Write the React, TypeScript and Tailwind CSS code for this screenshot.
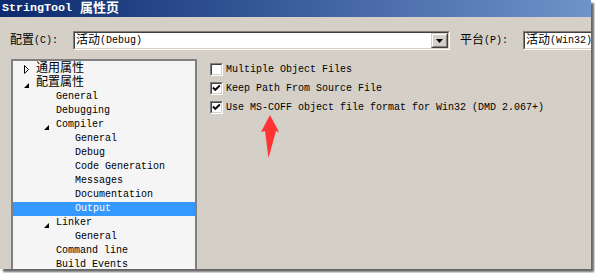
import React from 'react';

const mono = "font-['Liberation_Mono','Noto_Sans_CJK_SC',monospace]";

type Node = { label: string; pad: string; toggle?: 'open' | 'closed'; cjk?: boolean; selected?: boolean };

const tree: Node[] = [
  { label: '通用属性', pad: 'pl-[10px]', toggle: 'closed', cjk: true },
  { label: '配置属性', pad: 'pl-[10px]', toggle: 'open', cjk: true },
  { label: 'General', pad: 'pl-[43px]' },
  { label: 'Debugging', pad: 'pl-[43px]' },
  { label: 'Compiler', pad: 'pl-[30px]', toggle: 'open' },
  { label: 'General', pad: 'pl-[62px]' },
  { label: 'Debug', pad: 'pl-[62px]' },
  { label: 'Code Generation', pad: 'pl-[62px]' },
  { label: 'Messages', pad: 'pl-[62px]' },
  { label: 'Documentation', pad: 'pl-[62px]' },
  { label: 'Output', pad: 'pl-[62px]', selected: true },
  { label: 'Linker', pad: 'pl-[30px]', toggle: 'open' },
  { label: 'General', pad: 'pl-[62px]' },
  { label: 'Command line', pad: 'pl-[43px]' },
  { label: 'Build Events', pad: 'pl-[43px]' },
];

const options = [
  { label: 'Multiple Object Files', checked: false },
  { label: 'Keep Path From Source File', checked: true },
  { label: 'Use MS-COFF object file format for Win32 (DMD 2.067+)', checked: true },
];

function Sunken({ className, children }: { className: string; children: React.ReactNode }) {
  return (
    <div className={`border border-t-[#808080] border-l-[#808080] border-b-white border-r-white ${className}`}>
      <div className="h-full border border-t-[#404040] border-l-[#404040] border-b-[#d4d0c8] border-r-[#d4d0c8] bg-white">
        {children}
      </div>
    </div>
  );
}

function Toggle({ open }: { open: boolean }) {
  return (
    <svg width="13" height="14" viewBox="0 0 13 14" className="shrink-0">
      {open ? (
        <polygon points="6,7 6,12 1,12" fill="#000" />
      ) : (
        <polygon points="1.5,3.5 5.5,7.5 1.5,11.5" fill="none" stroke="#000" strokeWidth="1" />
      )}
    </svg>
  );
}

function Checkbox({ checked }: { checked: boolean }) {
  return (
    <Sunken className="w-[13px] h-[13px] shrink-0">
      {checked && (
        <svg width="9" height="9" viewBox="0 0 9 9">
          <polyline points="1,3.5 3.3,6 7.8,1.5" fill="none" stroke="#000" strokeWidth="1.9" />
        </svg>
      )}
    </Sunken>
  );
}

export default function App() {
  return (
    <div className={`w-[595px] h-[273px] bg-white overflow-hidden ${mono} text-[10px] text-black`}>
      <div className="relative w-[591px] h-[269px] bg-[#d4d0c8] overflow-hidden shadow-[3px_3px_2px_rgba(0,0,0,0.6)] flex flex-col">
        {/* title bar */}
        <div className="h-[17px] shrink-0 bg-gradient-to-r from-[#0c2a6e] to-[#7193cb] flex items-center pl-[2px] text-white font-bold whitespace-nowrap">
          <span className="text-[11.67px]">StringTool</span>
          <span className="text-[13px] ml-[8px]">属性页</span>
        </div>

        {/* configuration row */}
        <div className="flex items-center mt-[14px] h-[19px] shrink-0 whitespace-nowrap">
          <div className="w-[73px] pl-[10px] flex items-center shrink-0">
            <span className="text-[12px]">配置</span>
            <span>(C):</span>
          </div>
          <Sunken className="w-[377px] h-[19px] shrink-0">
            <div className="flex items-center h-full pl-[1px]">
              <span className="text-[12px]">活动</span>
              <span>(Debug)</span>
              <div className="ml-auto w-[17px] h-full border border-t-[#d4d0c8] border-l-[#d4d0c8] border-b-[#404040] border-r-[#404040] bg-[#d4d0c8]">
                <div className="h-full border border-t-white border-l-white border-b-[#808080] border-r-[#808080] flex items-center justify-center">
                  <svg width="7" height="4" viewBox="0 0 7 4">
                    <polygon points="0,0 7,0 3.5,4" fill="#000" />
                  </svg>
                </div>
              </div>
            </div>
          </Sunken>
          <div className="w-[63px] ml-[10px] flex items-center shrink-0">
            <span className="text-[12px]">平台</span>
            <span>(P):</span>
          </div>
          <Sunken className="w-[120px] h-[19px] shrink-0">
            <div className="flex items-center h-full pl-[1px]">
              <span className="text-[12px]">活动</span>
              <span>(Win32)</span>
            </div>
          </Sunken>
        </div>

        {/* body */}
        <div className="flex mt-[9px] flex-1 min-h-0">
          <div className="ml-[11px] w-[186px] shrink-0 border-2 border-b-0 border-t-[#808080] border-l-[#808080] border-r-[#808080] bg-[#f5f5f5] overflow-hidden pt-[1px]">
            {tree.map((n, i) => (
              <div
                key={i}
                className={`h-[14px] flex items-center whitespace-nowrap ${n.pad} ${n.selected ? 'bg-[#3399ff] text-white' : ''}`}
              >
                {n.toggle && <Toggle open={n.toggle === 'open'} />}
                <span className={n.cjk ? 'text-[12px] leading-[14px]' : 'leading-[14px]'}>{n.label}</span>
              </div>
            ))}
          </div>

          <div className="flex flex-col gap-[6px] pt-[4px] pl-[13px]">
            {options.map((o, i) => (
              <div key={i} className="flex items-center h-[13px] gap-[3px] whitespace-nowrap">
                <Checkbox checked={o.checked} />
                <span>{o.label}</span>
              </div>
            ))}
          </div>
        </div>

        {/* red pointer arrow */}
        <svg className="absolute left-[260px] top-[114px]" width="20" height="46" viewBox="0 0 20 46">
          <polygon points="10,1 19,18 16,17 8.5,44 5,17 1,18" fill="#ff3333" />
        </svg>
      </div>
    </div>
  );
}
